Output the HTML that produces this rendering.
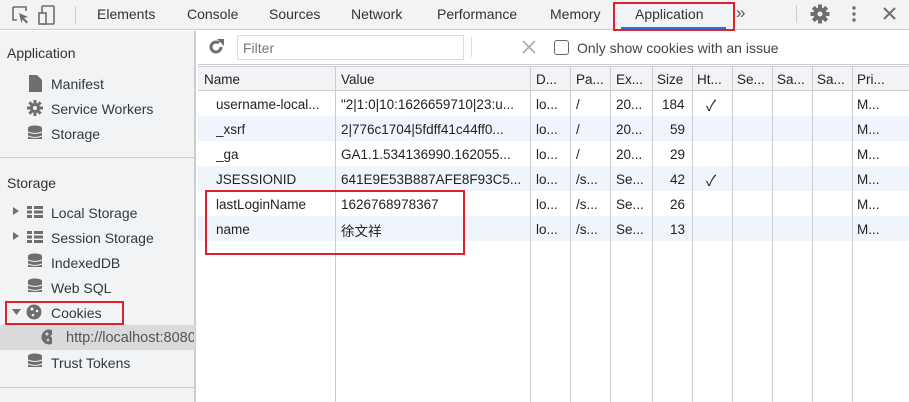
<!DOCTYPE html><html><head><meta charset="utf-8"><style>
*{margin:0;padding:0;box-sizing:border-box}
body{width:909px;height:402px;overflow:hidden;background:#fff;font-family:"Liberation Sans","Noto Sans CJK SC",sans-serif;font-size:14px;color:#303942;position:relative}
.a{position:absolute;white-space:nowrap}
.top{left:0;top:0;width:909px;height:30px;background:#f1f3f4;border-bottom:1px solid #cbcdd1}
.side{left:0;top:31px;width:196px;height:371px;background:#f1f3f4;border-right:2px solid #cbcdd1}
.ic{fill:#6e6e6e}
.row{left:198px;width:711px;height:25px}
.c{position:absolute;top:6px;font-size:13.5px;color:#222;overflow:hidden}
.vl{position:absolute;top:66px;width:1px;height:336px;background:#cbcdd1}
.red{position:absolute;border:2px solid #e0202a}
</style></head><body>
<div class="a top"></div>
<svg class="a" style="left:11px;top:5px" width="60" height="22"><path d="M2 2h13v4M2 2v13h4" fill="none" stroke="#6e6e6e" stroke-width="1.6"/><path d="M8 8l9 4-4 1 4 4-1.5 1.5-4-4-1 4z" fill="#6e6e6e"/><rect x="31" y="1" width="12" height="18" rx="1" fill="none" stroke="#6e6e6e" stroke-width="1.6"/><rect x="28" y="8" width="7" height="11" fill="#f1f3f4" stroke="#6e6e6e" stroke-width="1.6"/></svg>
<div class="a" style="left:75px;top:6px;width:1px;height:18px;background:#ccc"></div>
<div class="a" style="left:97px;top:6px;color:#333">Elements</div>
<div class="a" style="left:187px;top:6px;color:#333">Console</div>
<div class="a" style="left:269px;top:6px;color:#333">Sources</div>
<div class="a" style="left:351px;top:6px;color:#333">Network</div>
<div class="a" style="left:437px;top:6px;color:#333">Performance</div>
<div class="a" style="left:550px;top:6px;color:#333">Memory</div>
<div class="a" style="left:635px;top:6px;color:#333">Application</div>
<div class="a" style="left:621px;top:27px;width:105px;height:2px;background:#1a73e8"></div>
<div class="red" style="left:613px;top:2px;width:122px;height:29px"></div>
<div class="a" style="left:736px;top:3px;font-size:17px;color:#555">»</div>
<div class="a" style="left:796px;top:5px;width:1px;height:18px;background:#ccc"></div>
<svg class="a" style="left:810px;top:4px" width="90" height="20"><g transform="translate(10,10)"><circle r="6.5" fill="#6e6e6e"/><g fill="#6e6e6e"><rect x="-2" y="-9.5" width="4" height="19"/><rect x="-9.5" y="-2" width="19" height="4"/><rect x="-2" y="-9.5" width="4" height="19" transform="rotate(45)"/><rect x="-2" y="-9.5" width="4" height="19" transform="rotate(-45)"/></g><circle r="2.5" fill="#f1f3f4"/></g><circle cx="44" cy="4" r="1.7" fill="#6e6e6e"/><circle cx="44" cy="10" r="1.7" fill="#6e6e6e"/><circle cx="44" cy="16" r="1.7" fill="#6e6e6e"/><path d="M74 4l11 11M85 4L74 15" stroke="#6e6e6e" stroke-width="2"/></svg>

<div class="a side"></div>
<div class="a" style="left:7px;top:45px;color:#333">Application</div>
<svg class="a" style="left:27px;top:74px" width="18" height="300">
<path d="M2 1h8l5 5v12H2z" class="ic"/>
<g transform="translate(8,34)"><circle r="5" class="ic"/><g class="ic"><rect x="-1.5" y="-8" width="3" height="16"/><rect x="-8" y="-1.5" width="16" height="3"/><rect x="-1.5" y="-8" width="3" height="16" transform="rotate(45)"/><rect x="-1.5" y="-8" width="3" height="16" transform="rotate(-45)"/></g><circle r="2" fill="#f1f3f4"/></g>
<g><ellipse cx="8" cy="54" rx="7" ry="2.5" class="ic"/><rect x="1" y="54" width="14" height="11" class="ic"/><path d="M1 58q7 3 14 0M1 62q7 3 14 0" stroke="#f1f3f4" fill="none"/></g>
</svg>
<div class="a" style="left:51px;top:76px">Manifest</div>
<div class="a" style="left:51px;top:101px">Service Workers</div>
<div class="a" style="left:51px;top:126px">Storage</div>
<div class="a" style="left:0;top:157px;width:195px;height:1px;background:#cbcdd1"></div>
<div class="a" style="left:7px;top:175px;color:#333">Storage</div>
<div class="a" style="left:0;top:325px;width:195px;height:25px;background:#dadada"></div>
<svg class="a" style="left:12px;top:203px" width="40" height="170">
<path d="M1 4l6 4-6 4z" class="ic"/><path d="M1 29l6 4-6 4z" class="ic"/><path d="M0 106h9l-4.5 6z" class="ic"/>
<g class="ic"><rect x="15" y="3" width="5" height="3"/><rect x="22" y="3" width="9" height="3"/><rect x="15" y="7.5" width="5" height="3"/><rect x="22" y="7.5" width="9" height="3"/><rect x="15" y="12" width="5" height="3"/><rect x="22" y="12" width="9" height="3"/></g>
<g class="ic" transform="translate(0,25)"><rect x="15" y="3" width="5" height="3"/><rect x="22" y="3" width="9" height="3"/><rect x="15" y="7.5" width="5" height="3"/><rect x="22" y="7.5" width="9" height="3"/><rect x="15" y="12" width="5" height="3"/><rect x="22" y="12" width="9" height="3"/></g>
<g transform="translate(15,51)"><ellipse cx="8" cy="2" rx="7" ry="2.5" class="ic"/><rect x="1" y="2" width="14" height="11" class="ic"/><path d="M1 6q7 3 14 0M1 10q7 3 14 0" stroke="#f1f3f4" fill="none"/></g>
<g transform="translate(15,76)"><ellipse cx="8" cy="2" rx="7" ry="2.5" class="ic"/><rect x="1" y="2" width="14" height="11" class="ic"/><path d="M1 6q7 3 14 0M1 10q7 3 14 0" stroke="#f1f3f4" fill="none"/></g>
<g transform="translate(15,151)"><ellipse cx="8" cy="2" rx="7" ry="2.5" class="ic"/><rect x="1" y="2" width="14" height="11" class="ic"/><path d="M1 6q7 3 14 0M1 10q7 3 14 0" stroke="#f1f3f4" fill="none"/></g>
<circle cx="22" cy="109" r="7.5" class="ic"/><circle cx="20" cy="106" r="1.5" fill="#f1f3f4"/><circle cx="25" cy="108" r="1.3" fill="#f1f3f4"/><circle cx="21" cy="112" r="1.3" fill="#f1f3f4"/>
<circle cx="37" cy="134" r="7.5" class="ic"/><circle cx="35" cy="131" r="1.5" fill="#dadada"/><circle cx="40" cy="133" r="1.3" fill="#dadada"/><circle cx="36" cy="137" r="1.3" fill="#dadada"/>
</svg>
<div class="a" style="left:51px;top:205px">Local Storage</div>
<div class="a" style="left:51px;top:230px">Session Storage</div>
<div class="a" style="left:51px;top:255px">IndexedDB</div>
<div class="a" style="left:51px;top:280px">Web SQL</div>
<div class="a" style="left:51px;top:305px">Cookies</div>
<div class="a" style="left:66px;top:330px;color:#555;width:128px;overflow:hidden;font-size:14.5px">http://localhost:8080</div>
<div class="a" style="left:51px;top:355px">Trust Tokens</div>
<div class="a" style="left:0;top:387px;width:195px;height:1px;background:#cbcdd1"></div>
<div class="red" style="left:5px;top:301px;width:119px;height:24px"></div>

<svg class="a" style="left:207px;top:38px" width="18" height="18"><path d="M14 9a5 5 0 1 1-2-4" fill="none" stroke="#6e6e6e" stroke-width="3"/><path d="M10 1h7v7z" fill="#6e6e6e"/></svg>
<div class="a" style="left:237px;top:35px;width:227px;height:25px;border:1px solid #dcdcdc;background:#fff"></div>
<div class="a" style="left:243px;top:40px;color:#777">Filter</div>
<div class="a" style="left:471px;top:37px;width:1px;height:20px;background:#ddd"></div>
<svg class="a" style="left:522px;top:40px" width="14" height="14"><path d="M1 1l12 12M13 1L1 13" stroke="#aaa" stroke-width="1.6"/></svg>
<div class="a" style="left:554px;top:40px;width:15px;height:15px;border:1.5px solid #666;border-radius:3px;background:#fff"></div>
<div class="a" style="left:577px;top:40px;color:#444">Only show cookies with an issue</div>
<div class="a" style="left:198px;top:64px;width:711px;height:1px;background:#cbcdd1"></div>

<div class="a" style="left:198px;top:66px;width:711px;height:25px;background:#f1f3f4;border-top:1px solid #cbcdd1;border-bottom:1px solid #cbcdd1"></div>
<div class="a row" style="top:116px;background:#f0f5fd"></div>
<div class="a row" style="top:166px;background:#f0f5fd"></div>
<div class="a row" style="top:216px;background:#f0f5fd"></div>
<div class="vl" style="left:335px"></div><div class="vl" style="left:530px"></div><div class="vl" style="left:570px"></div><div class="vl" style="left:610px"></div><div class="vl" style="left:652px"></div><div class="vl" style="left:692px"></div><div class="vl" style="left:732px"></div><div class="vl" style="left:772px"></div><div class="vl" style="left:812px"></div><div class="vl" style="left:852px"></div>

<div class="a" style="left:0;top:66px;width:909px;height:25px">
<span class="c" style="left:204px">Name</span><span class="c" style="left:341px">Value</span><span class="c" style="left:536px">D...</span><span class="c" style="left:576px">Pa...</span><span class="c" style="left:616px">Ex...</span><span class="c" style="left:657px">Size</span><span class="c" style="left:697px">Ht...</span><span class="c" style="left:737px">Se...</span><span class="c" style="left:777px">Sa...</span><span class="c" style="left:817px">Sa...</span><span class="c" style="left:857px">Pri...</span></div>

<div class="a" style="left:0;top:91px;width:909px;height:25px"><span class="c" style="left:216px">username-local...</span><span class="c" style="left:341px">"2|1:0|10:1626659710|23:u...</span><span class="c" style="left:536px">lo...</span><span class="c" style="left:576px">/</span><span class="c" style="left:616px">20...</span><span class="c" style="left:662px">184</span><span class="c" style="left:706px;top:4px;font-size:15px">✓</span><span class="c" style="left:857px">M...</span></div>
<div class="a" style="left:0;top:116px;width:909px;height:25px"><span class="c" style="left:216px">_xsrf</span><span class="c" style="left:341px">2|776c1704|5fdff41c44ff0...</span><span class="c" style="left:536px">lo...</span><span class="c" style="left:576px">/</span><span class="c" style="left:616px">20...</span><span class="c" style="left:670px">59</span><span class="c" style="left:857px">M...</span></div>
<div class="a" style="left:0;top:141px;width:909px;height:25px"><span class="c" style="left:216px">_ga</span><span class="c" style="left:341px">GA1.1.534136990.162055...</span><span class="c" style="left:536px">lo...</span><span class="c" style="left:576px">/</span><span class="c" style="left:616px">20...</span><span class="c" style="left:670px">29</span><span class="c" style="left:857px">M...</span></div>
<div class="a" style="left:0;top:166px;width:909px;height:25px"><span class="c" style="left:216px">JSESSIONID</span><span class="c" style="left:341px">641E9E53B887AFE8F93C5...</span><span class="c" style="left:536px">lo...</span><span class="c" style="left:576px">/s...</span><span class="c" style="left:616px">Se...</span><span class="c" style="left:670px">42</span><span class="c" style="left:706px;top:4px;font-size:15px">✓</span><span class="c" style="left:857px">M...</span></div>
<div class="a" style="left:0;top:191px;width:909px;height:25px"><span class="c" style="left:216px">lastLoginName</span><span class="c" style="left:341px">1626768978367</span><span class="c" style="left:536px">lo...</span><span class="c" style="left:576px">/s...</span><span class="c" style="left:616px">Se...</span><span class="c" style="left:670px">26</span><span class="c" style="left:857px">M...</span></div>
<div class="a" style="left:0;top:216px;width:909px;height:25px"><span class="c" style="left:216px">name</span><span class="c" style="left:341px;top:4px">徐文祥</span><span class="c" style="left:536px">lo...</span><span class="c" style="left:576px">/s...</span><span class="c" style="left:616px">Se...</span><span class="c" style="left:670px">13</span><span class="c" style="left:857px">M...</span></div>
<div class="red" style="left:205px;top:190px;width:260px;height:65px"></div>
</body></html>
